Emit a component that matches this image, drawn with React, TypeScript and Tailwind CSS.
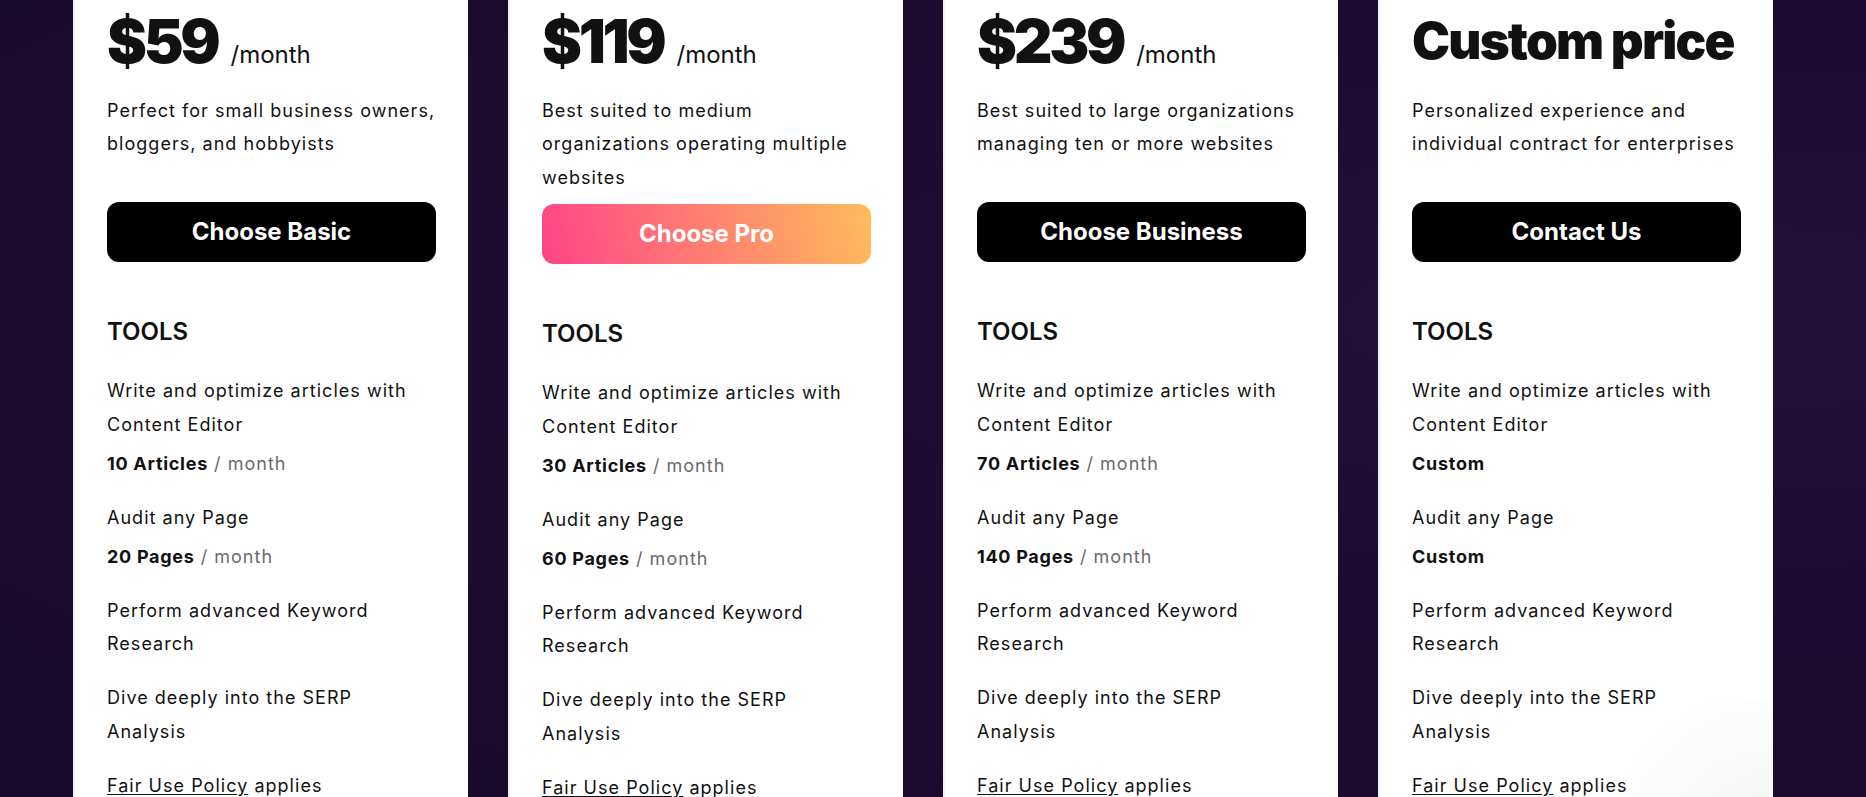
import React from 'react';

type Plan = {
  price: string;
  perMonth: boolean;
  blurb: string;
  cta: string;
  highlight?: boolean;
  articles: string;
  pages: string;
};

const plans: Plan[] = [
  {
    price: '$59',
    perMonth: true,
    blurb: 'Perfect for small business owners, bloggers, and hobbyists',
    cta: 'Choose Basic',
    articles: '10 Articles',
    pages: '20 Pages',
  },
  {
    price: '$119',
    perMonth: true,
    blurb: 'Best suited to medium organizations operating multiple websites',
    cta: 'Choose Pro',
    highlight: true,
    articles: '30 Articles',
    pages: '60 Pages',
  },
  {
    price: '$239',
    perMonth: true,
    blurb: 'Best suited to large organizations managing ten or more websites',
    cta: 'Choose Business',
    articles: '70 Articles',
    pages: '140 Pages',
  },
  {
    price: 'Custom price',
    perMonth: false,
    blurb: 'Personalized experience and individual contract for enterprises',
    cta: 'Contact Us',
    articles: 'Custom',
    pages: 'Custom',
  },
];

const Quota: React.FC<{ value: string }> = ({ value }) => (
  <p className="mt-[5.5px]">
    <span className="font-bold tracking-[0.04em]">{value}</span>
    {value !== 'Custom' && <span className="text-[#6b6b6b]"> / month</span>}
  </p>
);

const PlanCard: React.FC<{ plan: Plan; last?: boolean }> = ({ plan, last }) => {
  return (
    <div className="relative min-h-[900px] w-[395px] shrink-0 bg-white border-l-2 border-[#efeef4] px-[32px] pt-[11px] text-[#111111]">
      <div className="flex items-baseline gap-[13px] h-[60px]">
        {plan.perMonth ? (
          <>
            <span className="text-[60px] leading-[60px] font-black tracking-[-0.055em]">{plan.price}</span>
            <span className="text-[24px]">/month</span>
          </>
        ) : (
          <span className="text-[51px] leading-[60px] font-black tracking-[-0.035em]">{plan.price}</span>
        )}
      </div>

      <p className="mt-[22.7px] min-h-[98.5px] text-[18px] leading-[33.5px] tracking-[0.057em]">{plan.blurb}</p>

      <button
        className={
          plan.highlight
            ? 'mt-[10px] flex h-[60px] w-full items-center justify-center rounded-xl bg-linear-[75deg] from-[#ff4388] to-[#ffbd5a] text-[24px] font-bold text-white'
            : 'mt-[10px] flex h-[60px] w-full items-center justify-center rounded-xl bg-black text-[24px] font-bold text-white'
        }
      >
        {plan.cta}
      </button>

      <h3 className="mt-[54px] text-[24px] leading-[32px] font-semibold">TOOLS</h3>

      <ul className="mt-[26px] flex flex-col gap-[20.5px] pr-[6px] text-[18px] leading-[33.5px] tracking-[0.057em]">
        <li>
          <p>Write and optimize articles with Content Editor</p>
          <Quota value={plan.articles} />
        </li>
        <li>
          <p>Audit any Page</p>
          <Quota value={plan.pages} />
        </li>
        <li>
          <p>Perform advanced Keyword Research</p>
        </li>
        <li>
          <p>Dive deeply into the SERP Analysis</p>
        </li>
        <li>
          <p>
            <a href="#" className="underline underline-offset-[2px]">
              Fair Use Policy
            </a>{' '}
            applies
          </p>
        </li>
      </ul>

      {last && (
        <div className="pointer-events-none absolute right-0 top-[700px] h-[160px] w-[200px] bg-[radial-gradient(circle_at_100%_100%,rgba(0,0,0,0.06),transparent_70%)]" />
      )}
    </div>
  );
};

export default function App() {
  return (
    <div className="h-[797px] w-full overflow-hidden bg-[#1a0a2f] bg-[radial-gradient(ellipse_at_90%_40%,#231338_0%,#1c0c31_45%,#180a2c_100%)] font-['Inter',sans-serif]">
      <div className="flex gap-[40px] pl-[73px]">
        {plans.map((plan, i) => (
          <PlanCard key={plan.cta} plan={plan} last={i === plans.length - 1} />
        ))}
      </div>
    </div>
  );
}
